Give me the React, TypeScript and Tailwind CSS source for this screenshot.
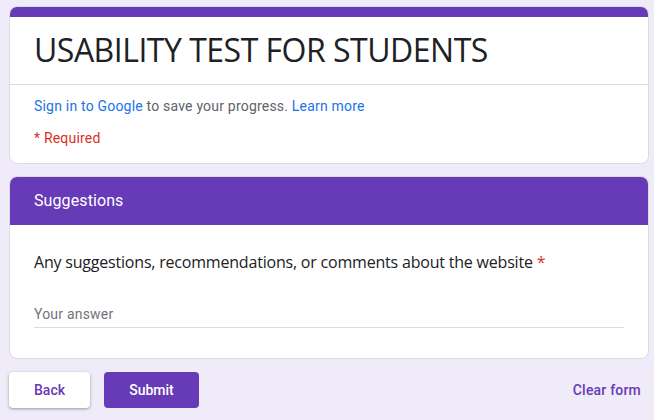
export default function App() {
  return (
    <div className="min-h-[420px] w-[654px] bg-[#f0ebf8] pt-[6px] font-['Roboto',sans-serif] text-[#202124]">
      <div className="ml-[9px] w-[640px]">
        {/* header card */}
        <div className="overflow-hidden rounded-lg border border-[#dadce0] bg-white">
          <div className="h-[10px] bg-[#673ab7]" />
          <div className="border-b border-[#dadce0] px-6 pb-[14px] pt-[13px]">
            <h1 className="font-['Open_Sans',sans-serif] text-[32px] leading-[40px] tracking-[-0.5px]">USABILITY TEST FOR STUDENTS</h1>
          </div>
          <div className="px-6 pb-[15px] pt-[11px] text-sm tracking-[0.2px]">
            <p className="leading-5 text-[#5f6368]">
              <span className="text-[#1a73e8]">Sign in to Google</span> to save your progress.{' '}
              <span className="text-[#1a73e8]">Learn more</span>
            </p>
            <p className="mt-3 leading-5 text-[#d93025]">* Required</p>
          </div>
        </div>

        {/* section card */}
        <div className="mt-3 overflow-hidden rounded-lg border border-[#dadce0] bg-white">
          <div className="flex h-12 items-center bg-[#673ab7] px-6 text-base tracking-[0.1px] text-white">Suggestions</div>
          <div className="px-6 pb-[30px] pt-[25px]">
            <p className="font-['Open_Sans',sans-serif] text-base leading-6 tracking-[-0.2px]">
              Any suggestions, recommendations, or comments about the website <span className="text-[#d93025]">*</span>
            </p>
            <div className="mt-[30px] border-b border-[#dadce0] pb-[3px] text-sm leading-5 tracking-[0.2px] text-[#70757a]">Your answer</div>
          </div>
        </div>

        {/* actions */}
        <div className="mt-[13px] flex items-center">
          <button className="h-9 w-[81px] rounded bg-white text-sm font-medium text-[#673ab7] shadow-[0_1px_2px_rgba(60,64,67,0.3),0_1px_3px_1px_rgba(60,64,67,0.15)]">Back</button>
          <button className="ml-[14px] h-9 w-[95px] rounded bg-[#673ab7] text-sm font-medium text-white">Submit</button>
          <span className="ml-auto pr-2 text-sm font-medium tracking-[0.2px] text-[#673ab7]">Clear form</span>
        </div>
      </div>
    </div>
  )
}
